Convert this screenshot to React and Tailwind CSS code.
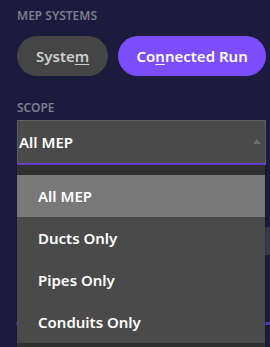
export default function App() {
  const items = ['All MEP', 'Ducts Only', 'Pipes Only', 'Conduits Only']

  return (
    <div className="relative w-[270px] h-[347px] overflow-hidden bg-[#1c1b3d] pl-[17px] pr-[4px] pt-[8px]" style={{ fontFamily: '"Noto Sans", "Open Sans", sans-serif' }}>
      <div className="text-[12px] leading-[16px] font-semibold text-[#7d7c8e]">MEP SYSTEMS</div>

      <div className="mt-[12px] flex gap-[10px]">
        <button className="w-[92px] h-[40px] rounded-full bg-[#454545] text-[15px] font-semibold text-[#cdcdcd]">
          Syste<span className="underline underline-offset-2">m</span>
        </button>
        <button className="w-[149px] h-[40px] rounded-full bg-[#7c4dfa] text-[15px] font-semibold text-white">
          Co<span className="underline underline-offset-2">n</span>nected Run
        </button>
      </div>

      <div className="mt-[24px] text-[12px] leading-[16px] font-semibold text-[#7d7c8e]">SCOPE</div>

      <div className="relative mt-[4px]">
        <div className="h-[45px] flex items-center justify-between border border-[#5e5e5e] border-b-2 border-b-[#7045e6] bg-[#4a4a4a] pl-[1px] pr-[3px]">
          <span className="text-[15px] font-semibold text-white">All MEP</span>
          <svg width="10" height="6" viewBox="0 0 10 6" className="mt-[-2px]">
            <path d="M1 6 L5 1 L9 6 Z" fill="#6c6c6c" />
          </svg>
        </div>

        {/* page content continuing under the open list */}
        <div className="mt-[21px] w-[40px] h-[8px] rounded-sm bg-[#2c2b48]" />
        <div className="mt-[33px] flex gap-[10px] mr-[-20px]">
          <div className="w-[100px] h-[28px] rounded-full bg-[#3a3a4a]" />
          <div className="flex-1 h-[28px] rounded-full bg-[#3a3a4a]" />
        </div>
        <div className="mt-[32px] w-[30px] h-[2px] bg-[#2c2b48]" />
        <div className="mt-[33px] h-[3px] mr-[-10px] ml-[-1px] bg-[#4b35b8]" />

        <div className="absolute left-0 top-[45px] w-[248px] bg-[#303030] pt-[10px] pb-[4px] shadow-[0_0_2px_rgba(0,0,0,0.5)]">
          {items.map((it, i) => (
            <div
              key={it}
              className={`h-[42px] flex items-center pl-[21px] text-[15px] font-semibold text-white ${i === 0 ? 'bg-[#787878]' : 'bg-[#4a4a4a]'}`}
            >
              {it}
            </div>
          ))}
        </div>
      </div>
    </div>
  )
}
